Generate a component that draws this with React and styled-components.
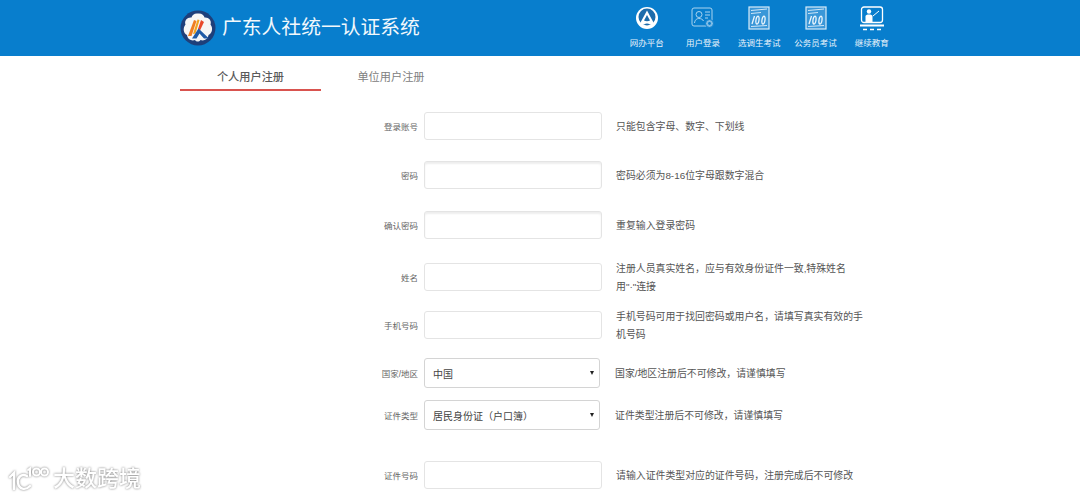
import React from 'react'
import styled, { createGlobalStyle } from 'styled-components'

const GlobalStyle = createGlobalStyle`
  html, body {
    margin: 0;
    padding: 0;
    height: 100%;
    overflow: hidden;
    background: #fff;
    font-family: "Liberation Sans", "Noto Sans CJK SC", sans-serif;
    color: #555;
  }
  * { box-sizing: border-box; }
`

const NAV = [
  { label: '网办平台', icon: 'portal' },
  { label: '用户登录', icon: 'user' },
  { label: '选调生考试', icon: 'exam' },
  { label: '公务员考试', icon: 'exam' },
  { label: '继续教育', icon: 'teach' },
]

const PortalIcon = () => (
  <svg width="24" height="24" viewBox="0 0 24 24">
    <circle cx="12" cy="12" r="11" fill="#fff" />
    <circle cx="12" cy="11" r="8.500" fill="#1d6cab" />
    <path d="M12 4.500 L5.500 16.500 C4.500 18.500 7 19.500 9 18.500 C10 18 11 17.500 12 17.500 C13 17.500 14 18 15 18.500 C17 19.500 19.500 18.500 18.500 16.500 Z" fill="#fff" />
    <path d="M12 9 L9 14.500 C10.500 15.500 13.500 15.500 15 14.500 Z" fill="#1d6cab" />
  </svg>
)

const UserIcon = () => (
  <svg width="24" height="24" viewBox="0 0 24 24" fill="none" stroke="#a9d3ef" strokeWidth="1">
    <rect x="1" y="2" width="20" height="18" rx="2" />
    <circle cx="8" cy="8.500" r="3" />
    <path d="M3.500 17 C4 13.500 6 12.500 8 12.500 C10 12.500 12 13.500 12.500 15" />
    <path d="M14 6 H19 M14 9 H19 M14 12 H17" />
    <circle cx="18.500" cy="17.500" r="4" fill="#7fbce6" stroke="#087ecd" />
    <circle cx="18.500" cy="17.500" r="1.400" fill="#087ecd" stroke="none" />
  </svg>
)

const ExamIcon = () => (
  <svg width="22" height="24" viewBox="0 0 22 24" fill="none" stroke="#eaf5fc" strokeWidth="1">
    <rect x="1" y="1" width="20" height="22" fill="#3a97d8" stroke="#d8ecf9" strokeWidth="1.200" />
    <path d="M3 4.500 L19 3 M3 7.500 L13 6.500" stroke="#cfe6f7" />
    <path d="M4 18 L6.500 10 M10 10.200 C8 10.500 7 17.500 8.800 18 C11 18.500 12 10 10 10.200 Z M16 10.200 C14 10.500 13 17.500 14.800 18 C17 18.500 18 10 16 10.200 Z" strokeWidth="1.300" />
    <path d="M3 20.500 L19 19.500" stroke="#cfe6f7" />
  </svg>
)

const TeachIcon = () => (
  <svg width="26" height="25" viewBox="0 0 26 25" fill="none">
    <rect x="2.500" y="1" width="21" height="15.500" rx="2.500" stroke="#fff" strokeWidth="1.300" />
    <circle cx="10" cy="5.500" r="2.200" fill="#fff" />
    <path d="M6.500 16 V10.500 C6.500 9 8 8.500 10 8.500 C12 8.500 13.500 9 13.500 10.500 V16 Z" fill="#fff" />
    <path d="M14 10 L20 5" stroke="#fff" strokeWidth="1" />
    <rect x="1" y="18.500" width="24" height="2" fill="#fff" />
    <path d="M4 23.500 H8 M11 23.500 H15 M18 23.500 H22" stroke="#fff" strokeWidth="1.400" />
  </svg>
)

const ICONS = { portal: PortalIcon, user: UserIcon, exam: ExamIcon, teach: TeachIcon }

const Logo = () => (
  <svg width="36" height="36" viewBox="0 0 36 36">
    <circle cx="18" cy="18" r="17.500" fill="#1e3f7a" />
    <path
      d="M18 3.500 C21.500 3 24 5 24.500 7.500 C28.500 7 32 10.500 30.500 14.500 C33.500 18 32 23.500 28.500 25 C28 29 24 31.500 20.500 30 C19 32 16.500 32 15 30 C11.500 31.500 7.500 29 7 25 C3.500 23.500 2.500 18 5.500 14.500 C4 10.500 7.500 7 11.500 7.500 C12 5 14.500 3 18 3.500 Z"
      fill="#f6f6f6"
    />
    <path d="M14 10 L8 26 L11.500 26 L16.500 11 Z" fill="#ef7d22" />
    <path d="M17.500 9.500 L13 24 L15.500 23.500 L19.500 10 Z" fill="#f2a31f" />
    <path d="M21 10 L18 19 L20 20.500 L24 12 Z" fill="#e8482b" />
    <path d="M18.500 18.500 L12 28.500 L16.500 28.500 L19.500 23.500 L24 28.500 L29 28.500 Z" fill="#1f5aa6" />
  </svg>
)

const WatermarkLogo = () => (
  <svg width="42" height="28" viewBox="0 0 42 28" fill="none" stroke="#fff" strokeWidth="2.400" strokeLinecap="round">
    <path d="M2 12 L6 8 V24" />
    <path d="M19 11 C13 8 9 13 10 18 C11 24 17 26 22 21" />
    <path d="M20 5 L22 3.500 V11" strokeWidth="2" />
    <circle cx="28.500" cy="7" r="3.500" strokeWidth="2" />
    <circle cx="36.500" cy="7" r="3.500" strokeWidth="2" />
  </svg>
)

const App = () => {
  return (
    <Page>
      <GlobalStyle />
      <Header>
        <HeaderInner>
          <Brand>
            <Logo />
            <BrandName>广东人社统一认证系统</BrandName>
          </Brand>
          <Nav>
            {NAV.map((item) => {
              const Icon = ICONS[item.icon]
              return (
                <NavItem key={item.label}>
                  <NavIcon>
                    <Icon />
                  </NavIcon>
                  <NavLabel>{item.label}</NavLabel>
                </NavItem>
              )
            })}
          </Nav>
        </HeaderInner>
      </Header>

      <Content>
        <Tabs>
          <Tab $active>个人用户注册</Tab>
          <Tab>单位用户注册</Tab>
        </Tabs>

        <Form>
          <Row $top={21}>
            <Label>登录账号</Label>
            <Input />
            <Help>只能包含字母、数字、下划线</Help>
          </Row>
          <Row $top={21}>
            <Label>密码</Label>
            <Input $inset type="password" />
            <Help>密码必须为8-16位字母跟数字混合</Help>
          </Row>
          <Row $top={22}>
            <Label>确认密码</Label>
            <Input $inset type="password" />
            <Help>重复输入登录密码</Help>
          </Row>
          <Row $top={24}>
            <Label>姓名</Label>
            <Input />
            <Help>
              注册人员真实姓名，应与有效身份证件一致,特殊姓名
              <br />
              用"·"连接
            </Help>
          </Row>
          <Row $top={20}>
            <Label>手机号码</Label>
            <Input />
            <Help>
              手机号码可用于找回密码或用户名，请填写真实有效的手
              <br />
              机号码
            </Help>
          </Row>
          <Row $top={19} $select>
            <Label>国家/地区</Label>
            <SelectBox>
              中国
              <Caret />
            </SelectBox>
            <Help $select>国家/地区注册后不可修改，请谨慎填写</Help>
          </Row>
          <Row $top={12} $select>
            <Label>证件类型</Label>
            <SelectBox>
              居民身份证（户口簿）
              <Caret />
            </SelectBox>
            <Help $select>证件类型注册后不可修改，请谨慎填写</Help>
          </Row>
          <Row $top={31}>
            <Label>证件号码</Label>
            <Input />
            <Help>请输入证件类型对应的证件号码，注册完成后不可修改</Help>
          </Row>
        </Form>
      </Content>

      <Watermark>
        <WatermarkLogo />
        <WatermarkText>大数跨境</WatermarkText>
      </Watermark>
    </Page>
  )
}

export default App

// styling
const Page = styled.div`
  position: relative;
  width: 1080px;
  height: 498px;
  overflow: hidden;
  background: #fff;
`
const Header = styled.header`
  height: 56px;
  background: #087ecd;
`
const HeaderInner = styled.div`
  width: 720px;
  height: 100%;
  margin: 0 auto;
  display: flex;
  justify-content: space-between;
`
const Brand = styled.div`
  display: flex;
  align-items: center;
  height: 56px;
  gap: 6px;
  padding-bottom: 1px;
`
const BrandName = styled.div`
  color: #f2f8fc;
  font-size: 19.800px;
  line-height: 1;
`
const Nav = styled.nav`
  display: flex;
`
const NavItem = styled.div`
  width: 56.300px;
  display: flex;
  flex-direction: column;
  align-items: center;
`
const NavIcon = styled.div`
  height: 26px;
  margin-top: 5px;
  display: flex;
  align-items: center;
  justify-content: center;
`
const NavLabel = styled.div`
  margin-top: 6px;
  color: #e8f3fb;
  font-size: 8.500px;
  line-height: 12px;
  white-space: nowrap;
`
const Content = styled.main`
  width: 720px;
  margin: 0 auto;
`
const Tabs = styled.div`
  display: flex;
`
const Tab = styled.div`
  width: ${({ $active }) => ($active ? '141px' : '140px')};
  height: 35px;
  padding-top: 13px;
  text-align: center;
  font-size: 11.200px;
  line-height: 16px;
  font-weight: ${({ $active }) => ($active ? 500 : 400)};
  color: ${({ $active }) => ($active ? '#5a5a5a' : '#808080')};
  border-bottom: ${({ $active }) => ($active ? '2px solid #d9534f' : 'none')};
`
const Form = styled.form`
  display: flex;
  flex-direction: column;
`
/* fixed height: two-line help text hangs over the row without pushing the next one */
const Row = styled.div`
  display: flex;
  align-items: center;
  height: ${({ $select }) => ($select ? '30px' : '28px')};
  margin-top: ${({ $top }) => $top}px;
`
const Label = styled.label`
  width: 244px;
  padding-right: 6px;
  text-align: right;
  font-size: 8.500px;
  color: #666;
  white-space: nowrap;
`
const Input = styled.input`
  width: 178px;
  height: 28px;
  padding: 0 8px;
  border: 1px solid #e4e4e4;
  border-radius: 3px;
  outline: none;
  background: #fff;
  box-shadow: ${({ $inset }) => ($inset ? 'inset 0 2px 2px rgba(0, 0, 0, 0.07)' : 'none')};
`
const SelectBox = styled.div`
  position: relative;
  width: 176px;
  height: 30px;
  padding-left: 8px;
  display: flex;
  align-items: center;
  border: 1px solid #d4d4d4;
  border-radius: 3px;
  background: #fff;
  font-size: 10px;
  color: #444;
`
const Caret = styled.span`
  position: absolute;
  right: 5px;
  top: 12px;
  border-left: 2px solid transparent;
  border-right: 2px solid transparent;
  border-top: 4px solid #222;
`
const Help = styled.div`
  flex: none;
  margin-left: ${({ $select }) => ($select ? '15px' : '14px')};
  padding-top: 1px;
  width: 250px;
  font-size: 9.900px;
  line-height: 18px;
  color: #555;
`
const Watermark = styled.div`
  position: absolute;
  left: 8px;
  bottom: 5px;
  display: flex;
  align-items: center;
  gap: 3px;
  filter: drop-shadow(0 0 1px rgba(90, 90, 90, 0.8));
`
const WatermarkText = styled.div`
  color: #fff;
  font-size: 22px;
  font-weight: 500;
  line-height: 28px;
  white-space: nowrap;
`
